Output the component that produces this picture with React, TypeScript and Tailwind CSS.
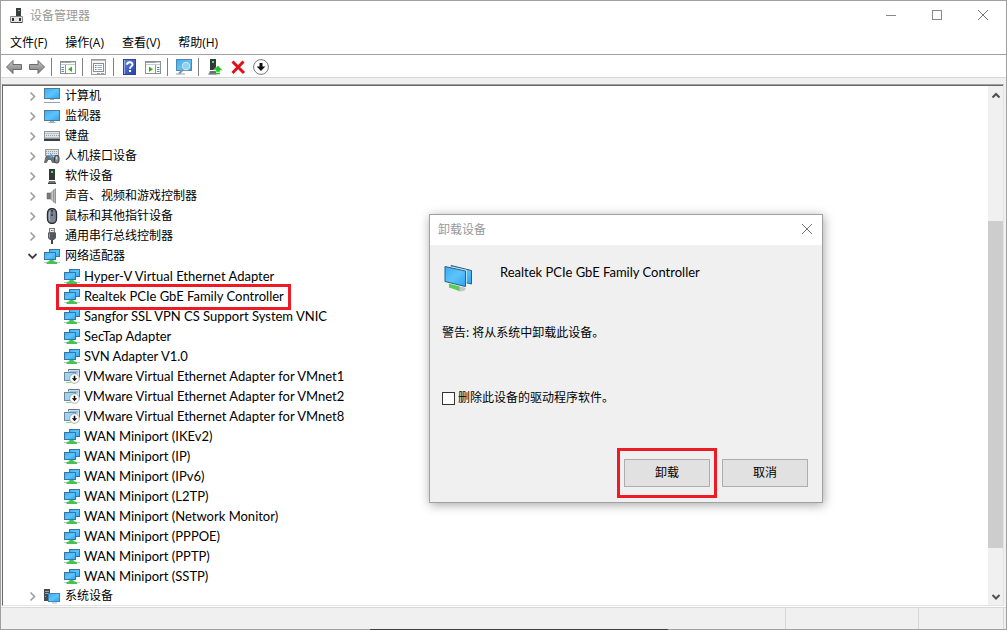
import type { ReactNode } from "react";

function Svg({ children, size = "h-4 w-4", box = "0 0 16 16" }: { children: ReactNode; size?: string; box?: string }) {
  return (
    <svg viewBox={box} className={`${size} shrink-0`} aria-hidden="true" fill="none">
      {children}
    </svg>
  );
}

function Defs() {
  return (
    <svg className="absolute h-0 w-0" aria-hidden="true">
      <defs>
        <linearGradient id="screen" x1="0" y1="0" x2="1" y2="1">
          <stop offset="0" stopColor="#3fa9f0" />
          <stop offset="0.5" stopColor="#5cc4fb" />
          <stop offset="1" stopColor="#2fa4ef" />
        </linearGradient>
        <linearGradient id="steel" x1="0" y1="0" x2="1" y2="0">
          <stop offset="0" stopColor="#6d6d6d" />
          <stop offset="0.5" stopColor="#cfcfcf" />
          <stop offset="1" stopColor="#6d6d6d" />
        </linearGradient>
        <linearGradient id="arrow" x1="0" y1="0" x2="0" y2="1">
          <stop offset="0" stopColor="#c4c4c4" />
          <stop offset="1" stopColor="#7c7c7c" />
        </linearGradient>
        <linearGradient id="help" x1="0" y1="0" x2="1" y2="1">
          <stop offset="0" stopColor="#6483de" />
          <stop offset="1" stopColor="#2440a8" />
        </linearGradient>
      </defs>
    </svg>
  );
}

const ComputerIcon = () => (
  <Svg>
    <rect x="0.5" y="0.5" width="15" height="10" fill="url(#screen)" stroke="#4d7a99" />
    <path d="M6 11.500h4" stroke="#8fb3c9" />
    <path d="M0 14.500h16" stroke="#8fa5b5" />
  </Svg>
);

const MonitorIcon = () => (
  <Svg>
    <rect x="0.5" y="2.500" width="15" height="10" fill="url(#screen)" stroke="#4d7a99" />
    <path d="M6 13.500h4M4.500 14.500h7" stroke="#9ab4c4" />
  </Svg>
);

const KeyboardIcon = () => (
  <Svg>
    <rect x="0" y="3" width="16" height="10" fill="#8d9499" />
    <rect x="1" y="4" width="14" height="6" fill="#e2e5e7" />
    <path d="M1.500 5.500h13M2 7.500h13M1.500 9.500h13" stroke="#9aa0a5" strokeDasharray="1 1" />
    <rect x="0" y="11" width="16" height="2" fill="#3b4045" />
  </Svg>
);

const HidIcon = () => (
  <Svg>
    <rect x="1.500" y="1.500" width="13" height="6" fill="#dfe2e4" stroke="#999" />
    <path d="M2 3.500h12M2 5.500h12" stroke="#9a9fa3" strokeDasharray="1 1" />
    <path d="M0.500 14.500L2 8.500h7l2 6H8.500L7 11.500H4L2.500 14.500z" fill="#6b7074" stroke="#565b5f" strokeWidth="0.800" />
    <path d="M4.500 7.500l3-1.500 1.500 3-2 1.500z" fill="#3fa9f0" />
    <rect x="10.500" y="7.500" width="4.500" height="7.500" rx="2" fill="#84898d" stroke="#3c4044" />
    <path d="M12.700 8.500v3" stroke="#e4e4e4" />
  </Svg>
);

const SoftwareIcon = () => (
  <Svg>
    <rect x="5" y="1" width="6" height="11" fill="#32373a" />
    <rect x="7" y="3" width="2" height="2" fill="#3ff052" />
    <path d="M5 13h6l1 2H4z" fill="#6d7276" />
    <path d="M4 15.500h8" stroke="#3d4143" />
  </Svg>
);

const SpeakerIcon = () => (
  <Svg>
    <path d="M3 5h3v6H3z" fill="#777d81" stroke="#5b6063" strokeWidth="0.500" />
    <path d="M6 5l4.500-4.500v15L6 11z" fill="url(#steel)" />
    <path d="M11.500 0.500v15" stroke="#8d9296" />
  </Svg>
);

const MouseIcon = () => (
  <Svg>
    <rect x="3.500" y="0.500" width="9" height="15" rx="4.500" fill="#7d8694" stroke="#252a30" strokeWidth="1.300" />
    <path d="M6 3.500C4.800 6 4.800 10 6 12.500" stroke="#b9c0ca" />
    <rect x="7" y="2" width="2" height="6" rx="1" fill="#20242a" />
    <path d="M8 3.500v3" stroke="#e0e4ea" strokeWidth="0.800" />
  </Svg>
);

const UsbIcon = () => (
  <Svg>
    <rect x="5.500" y="0.500" width="5" height="4" fill="#e6e6e6" stroke="#777" />
    <path d="M7 2.500h0.800M8.500 2.500h0.800" stroke="#555" />
    <path d="M4 4.500h8v5.500l-2 2H6L4 10z" fill="#54595d" />
    <path d="M5.500 5.500v4" stroke="#9a9ea1" />
    <path d="M8 12v4" stroke="#44484b" strokeWidth="2" />
  </Svg>
);

const NetworkIcon = () => (
  <Svg>
    <rect x="5.500" y="1.500" width="10" height="7" fill="url(#screen)" stroke="#35759f" />
    <path d="M0 14.500h16" stroke="#c5cbd0" />
    <rect x="0.500" y="4.500" width="11" height="7" fill="url(#screen)" stroke="#35759f" />
    <path d="M5.500 12h4v1l3.500 1.200V16H2.500v-1.800L5.500 13z" fill="#45c24f" />
  </Svg>
);

const DisabledNetworkIcon = () => (
  <Svg>
    <path d="M4.500 3.500v-2h11v8" stroke="#6f7479" />
    <path d="M5 2h10v6H5z" fill="#e4f1f9" />
    <path d="M5.500 2.500h9v3h-9z" fill="#8dc9ec" />
    <rect x="0.500" y="4.500" width="11" height="8" fill="#9ed4f4" stroke="#6f8796" />
    <path d="M2 14.500h5" stroke="#8bd28f" />
    <circle cx="10.500" cy="10.500" r="4.800" fill="#fff" stroke="#999" strokeWidth="0.800" />
    <path d="M9.700 7.700h1.600v2.500h1.900l-2.700 3-2.700-3h1.900z" fill="#111" />
  </Svg>
);

const SystemIcon = () => (
  <Svg>
    <rect x="0" y="1" width="6" height="12" fill="#454b50" />
    <path d="M1 3.500h4M1 5.500h4" stroke="#9da3a7" />
    <rect x="1" y="8" width="1" height="1" fill="#4be35a" />
    <rect x="4.500" y="5.500" width="11" height="8" fill="url(#screen)" stroke="#3f86b3" />
    <path d="M8 15h5" stroke="#9ab4c4" />
  </Svg>
);

const Chevron = ({ open = false }: { open?: boolean }) => (
  <Svg>
    {open ? (
      <path d="M4.500 6L8.500 10L12.500 6" stroke="#404040" strokeWidth="1.800" />
    ) : (
      <path d="M6.500 4.500L10.500 8.500L6.500 12.500" stroke="#a0a0a0" strokeWidth="1.700" />
    )}
  </Svg>
);

const ArrowIcon = ({ right = false }: { right?: boolean }) => (
  <Svg>
    <path
      d={right ? "M15.500 8L9 1.500v4H0.500v5H9v4z" : "M0.500 8L7 1.500v4h8.500v5H7v4z"}
      fill="url(#arrow)"
      stroke="#6a6a6a"
      strokeLinejoin="round"
    />
  </Svg>
);

const PaneIcon = ({ flip = false }: { flip?: boolean }) => (
  <Svg>
    <rect x="0.500" y="2.500" width="15" height="12" fill="#fff" stroke="#8c9196" />
    <path d="M1 3.500h14" stroke="#9ba3aa" />
    <path d="M1 5.500h14" stroke="#c4c9cd" />
    <path d="M11.500 3.500h1M13.500 3.500h1" stroke="#fff" />
    {flip ? (
      <>
        <path d="M10.500 6v8" stroke="#8c9196" />
        <path d="M12 8.500h2.500M12 10.500h2.500M12 12.500h2.500" stroke="#5b86b8" />
        <path d="M4 7.500v5.500l4-2.700z" fill="#32b41f" />
      </>
    ) : (
      <>
        <path d="M5.500 6v8" stroke="#8c9196" />
        <path d="M1.500 8.500H4M1.500 10.500H4M1.500 12.500H4" stroke="#5b86b8" />
        <path d="M12 7.500v5.500l-4-2.700z" fill="#32b41f" />
      </>
    )}
  </Svg>
);

const PropertiesIcon = () => (
  <Svg>
    <rect x="0.500" y="0.500" width="14" height="15" fill="#f6f6f6" stroke="#9a9a9a" />
    <path d="M1 1.500h13" stroke="#bcbcbc" />
    <rect x="2.500" y="4.500" width="10" height="8" fill="#fff" stroke="#8a8f93" />
    <path d="M4 6.500h1.500M4 8.500h1.500M4 10.500h1.500" stroke="#4a86bd" />
    <path d="M6.500 6.500H11M6.500 8.500H11M6.500 10.500H11" stroke="#a9adb0" />
    <path d="M6 14.500h3M10 14.500h3" stroke="#a5a5a5" />
  </Svg>
);

const HelpIcon = () => (
  <Svg>
    <rect x="1.500" y="0.500" width="12" height="15" fill="url(#help)" stroke="#2a43a0" />
    <path d="M2.500 1v14" stroke="#93a7e8" />
    <path d="M5 5.700c0-3.300 5.500-3.300 5.500-0.300 0 2-2.500 2-2.500 4.300" stroke="#fff" strokeWidth="1.900" />
    <rect x="7" y="11" width="2" height="2" fill="#fff" />
  </Svg>
);

const ScanIcon = () => (
  <Svg>
    <rect x="0.500" y="0.500" width="15" height="11" fill="url(#screen)" stroke="#5189ad" />
    <path d="M0 15h9" stroke="#8ba5b6" />
    <path d="M7.700 9.700L3 14.800" stroke="#8a98a1" strokeWidth="2" />
    <circle cx="10" cy="7" r="3.900" fill="#8fd3f8" stroke="#d3e8f4" strokeWidth="1.200" />
    <circle cx="10" cy="7" r="4.700" stroke="#6790a8" strokeWidth="0.500" />
  </Svg>
);

const UpdateDriverIcon = () => (
  <Svg>
    <rect x="3" y="0" width="6" height="11" fill="#33383b" />
    <rect x="5" y="2" width="2" height="2" fill="#41ef55" />
    <path d="M3 12h6v2.500H2z" fill="#6a6e71" />
    <path d="M1.500 15h8" stroke="#44484b" />
    <path d="M11 6.500l4.800 4.700h-2.800V13H9v-1.800H6.200z" fill="#1fc41f" stroke="#fff" strokeWidth="0.400" />
    <path d="M9 14.500h4" stroke="#1fc41f" strokeWidth="1.500" />
  </Svg>
);

const RemoveIcon = () => (
  <Svg>
    <path d="M2.500 2.500L14 14M13.500 2.500L2.500 14" stroke="#e0101a" strokeWidth="3" />
  </Svg>
);

const DisableIcon = () => (
  <Svg>
    <circle cx="8" cy="8" r="7.400" fill="#fff" stroke="#777" />
    <path d="M6.500 4h3v3.500h2.800L8 12 3.700 7.500h2.800z" fill="#111" />
  </Svg>
);

const AppIcon = () => (
  <Svg>
    <rect x="7" y="0" width="5" height="8" fill="#3a3e40" />
    <rect x="9" y="2" width="2" height="1" fill="#67c46e" />
    <path d="M1.500 8.500h12v6h-12z" fill="#e4e4e4" stroke="#888" />
    <path d="M2 14.500h11" stroke="#444" />
    <rect x="3" y="10" width="2" height="3" fill="#2d3032" />
    <rect x="10" y="10" width="2" height="3" fill="#2d3032" />
  </Svg>
);

const DeviceIcon = () => (
  <Svg size="h-8 w-8" box="0 0 32 32">
    <path d="M12 27l8-2 4 2.500-2 2.500-5 0.500z" fill="#c4c7c9" />
    <path d="M9 4.500L29.500 9.500V23L9 18z" fill="url(#screen)" stroke="#2c5f85" />
    <path d="M7 21l10.500 3v6L7 26.500z" fill="#5ccb5b" />
    <path d="M3 5.500L23.500 10v15.500L3 20.500z" stroke="#e7f2f8" strokeWidth="2.400" />
    <path d="M3 5.500L23.500 10v15.500L3 20.500z" fill="url(#screen)" stroke="#2c5f85" />
  </Svg>
);

const toolbar: (null | [string, () => ReactNode])[] = [
  ["后退", () => <ArrowIcon />],
  ["前进", () => <ArrowIcon right />],
  null,
  ["显示控制台树", () => <PaneIcon />],
  null,
  ["属性", () => <PropertiesIcon />],
  null,
  ["帮助", () => <HelpIcon />],
  ["操作窗格", () => <PaneIcon flip />],
  null,
  ["扫描检测硬件改动", () => <ScanIcon />],
  null,
  ["更新驱动程序", () => <UpdateDriverIcon />],
  ["卸载设备", () => <RemoveIcon />],
  ["禁用设备", () => <DisableIcon />],
];

type Category = { name: string; icon: ReactNode; children?: { name: string; disabled?: boolean; marked?: boolean }[] };

const categories: Category[] = [
  { name: "计算机", icon: <ComputerIcon /> },
  { name: "监视器", icon: <MonitorIcon /> },
  { name: "键盘", icon: <KeyboardIcon /> },
  { name: "人机接口设备", icon: <HidIcon /> },
  { name: "软件设备", icon: <SoftwareIcon /> },
  { name: "声音、视频和游戏控制器", icon: <SpeakerIcon /> },
  { name: "鼠标和其他指针设备", icon: <MouseIcon /> },
  { name: "通用串行总线控制器", icon: <UsbIcon /> },
  {
    name: "网络适配器",
    icon: <NetworkIcon />,
    children: [
      { name: "Hyper-V Virtual Ethernet Adapter" },
      { name: "Realtek PCIe GbE Family Controller", marked: true },
      { name: "Sangfor SSL VPN CS Support System VNIC" },
      { name: "SecTap Adapter" },
      { name: "SVN Adapter V1.0" },
      { name: "VMware Virtual Ethernet Adapter for VMnet1", disabled: true },
      { name: "VMware Virtual Ethernet Adapter for VMnet2", disabled: true },
      { name: "VMware Virtual Ethernet Adapter for VMnet8", disabled: true },
      { name: "WAN Miniport (IKEv2)" },
      { name: "WAN Miniport (IP)" },
      { name: "WAN Miniport (IPv6)" },
      { name: "WAN Miniport (L2TP)" },
      { name: "WAN Miniport (Network Monitor)" },
      { name: "WAN Miniport (PPPOE)" },
      { name: "WAN Miniport (PPTP)" },
      { name: "WAN Miniport (SSTP)" },
    ],
  },
  { name: "系统设备", icon: <SystemIcon /> },
];

function Tree() {
  return (
    <ul className="min-w-0 flex-1 overflow-hidden whitespace-nowrap">
      {categories.map((c) => (
        <li key={c.name}>
          <div className="flex h-5 items-center gap-1 pl-[21px]">
            <Chevron open={!!c.children} />
            {c.icon}
            <span className="pl-px">{c.name}</span>
          </div>
          {c.children && (
            <ul>
              {c.children.map((d) => (
                <li key={d.name} className="flex pl-[61px]">
                  <div className="relative flex h-5 items-center gap-1 font-['Lato',sans-serif] text-[13px]">
                    {d.disabled ? <DisabledNetworkIcon /> : <NetworkIcon />}
                    <span>{d.name}</span>
                    {d.marked && (
                      <span className="absolute -top-0.5 -bottom-1 -left-2 z-10 w-[235px] border-3 border-[#ed1c24]" />
                    )}
                  </div>
                </li>
              ))}
            </ul>
          )}
        </li>
      ))}
    </ul>
  );
}

function ScrollBar() {
  return (
    <div className="flex w-[15px] shrink-0 flex-col bg-[#f0f0f0]">
      <button aria-label="向上滚动" className="flex h-[17px] items-center justify-center">
        <Svg>
          <path d="M4.500 10.500L8 7l3.500 3.500" stroke="#505050" strokeWidth="2" />
        </Svg>
      </button>
      <div className="flex flex-1 flex-col">
        <div className="grow-[118]" />
        <div className="grow-[327] bg-[#cdcdcd]" />
        <div className="grow-[40]" />
      </div>
      <button aria-label="向下滚动" className="flex h-[17px] items-center justify-center">
        <Svg>
          <path d="M4.500 6L8 9.500L11.500 6" stroke="#505050" strokeWidth="2" />
        </Svg>
      </button>
    </div>
  );
}

function UninstallDialog() {
  return (
    <section
      role="dialog"
      aria-labelledby="dialog-title"
      className="absolute top-[213px] left-[428px] z-20 flex w-[394px] flex-col border border-[#a0a0a0] bg-[#f0f0f0] shadow-[1px_2px_10px_rgba(0,0,0,0.35)]"
    >
      <header className="flex h-[30px] items-center justify-between bg-white pl-2">
        <h2 id="dialog-title" className="text-[#999]">
          卸载设备
        </h2>
        <button aria-label="关闭" className="flex w-[31px] justify-center">
          <Svg>
            <path d="M3 2l10 10M13 2L3 12" stroke="#777" />
          </Svg>
        </button>
      </header>
      <div className="flex flex-col px-3 pt-4 pb-[15px]">
        <div className="flex gap-[26px]">
          <DeviceIcon />
          <p className="pt-px font-['Lato',sans-serif] text-[13px]">Realtek PCIe GbE Family Controller</p>
        </div>
        <p className="pt-[30px]">警告: 将从系统中卸载此设备。</p>
        <label className="mt-[45px] flex items-center gap-[3px]">
          <input type="checkbox" className="h-[13px] w-[13px] appearance-none border border-[#333] bg-white" />
          删除此设备的驱动程序软件。
        </label>
        <div className="mt-[51px] flex justify-end gap-3 pr-0.5">
          <div className="relative flex">
            <button className="h-7 w-[86px] border border-[#adadad] bg-[#e1e1e1]">卸载</button>
            <span className="pointer-events-none absolute -inset-x-[7px] -inset-y-[11px] border-3 border-[#ed1c24]" />
          </div>
          <button className="h-7 w-[86px] border border-[#adadad] bg-[#e1e1e1]">取消</button>
        </div>
      </div>
    </section>
  );
}

export default function App() {
  return (
    <main className="relative flex min-h-screen flex-col border border-[#a0a0a0] bg-white font-['Noto_Sans','Noto_Sans_CJK_SC',sans-serif] text-[12px] leading-5 text-black">
      <Defs />
      <header className="flex h-[29px] items-center justify-between pl-2">
        <div className="flex items-center gap-[5px]">
          <AppIcon />
          <h1 className="text-[#999]">设备管理器</h1>
        </div>
        <div className="flex">
          <button aria-label="最小化" className="flex w-[46px] justify-center">
            <Svg>
              <path d="M3 7.500h10" stroke="#888" />
            </Svg>
          </button>
          <button aria-label="最大化" className="flex w-[46px] justify-center">
            <Svg>
              <rect x="3.500" y="2.500" width="9" height="9" stroke="#888" />
            </Svg>
          </button>
          <button aria-label="关闭" className="flex w-[46px] justify-center">
            <Svg>
              <path d="M3 2l10 10M13 2L3 12" stroke="#777" />
            </Svg>
          </button>
        </div>
      </header>
      <nav className="flex h-6 items-center gap-[2px] pt-[2px] pl-px font-['Open_Sans','Noto_Sans_CJK_SC',sans-serif]">
        {["文件(F)", "操作(A)", "查看(V)", "帮助(H)"].map((m) => (
          <button key={m} className="px-2">
            {m}
          </button>
        ))}
      </nav>
      <div className="flex h-6 items-center border-y border-t-[#a0a0a0] border-b-[#d7d7d7] pt-[2px] pl-px">
        {toolbar.map((t, i) =>
          t ? (
            <button key={i} aria-label={t[0]} className="flex w-[23px] justify-center">
              {t[1]()}
            </button>
          ) : (
            <span key={i} className="flex w-2 pl-[3px]">
              <span className="h-[18px] w-px bg-[#808080]" />
            </span>
          ),
        )}
      </div>
      <div className="flex flex-1 flex-col border-b border-white bg-[#f0f0f0] pt-1.5 pr-[2px] pl-px">
        <div className="border border-t-[#a0a0a0] border-r-[#e3e3e3] border-b-[#e3e3e3] border-l-[#696969]">
          <div className="flex h-[520px] border-t border-[#696969] bg-white">
            <Tree />
            <ScrollBar />
          </div>
        </div>
      </div>
      <footer className="flex h-[22px] border-t border-[#d7d7d7] bg-[#f0f0f0] pr-[2px]">
        <div className="flex-1 border-r border-[#d7d7d7]" />
        <div className="w-[133px] border-r border-[#d7d7d7]" />
        <div className="w-[85px] border-r border-[#d7d7d7]" />
      </footer>
      <span className="absolute -bottom-px left-[369px] h-px w-[298px] bg-[#404040]" />
      <UninstallDialog />
    </main>
  );
}
